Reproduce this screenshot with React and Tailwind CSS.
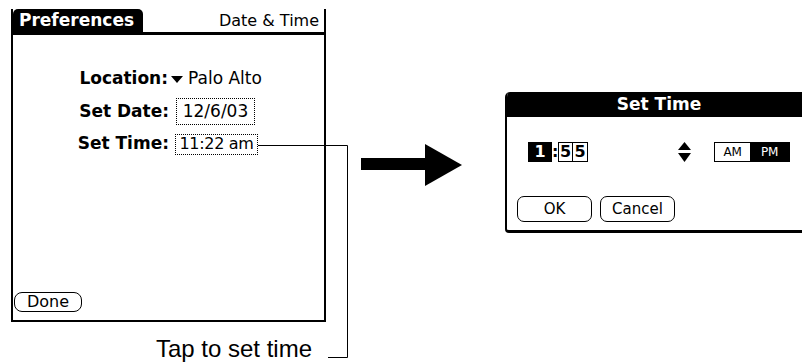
import React from 'react'

// Palm-style pieces
function DropTriangle() {
  return (
    <svg width="12" height="7" viewBox="0 0 12 7" className="mr-[5px]">
      <polygon points="0,0 12,0 6,7" fill="black" />
    </svg>
  )
}

function PalmScreen() {
  return (
    <div className="w-[315px] h-[313px] border-x-2 border-b-2 border-black flex flex-col">
      {/* Title bar */}
      <div className="h-[26px] border-b-[3px] border-black flex items-stretch justify-between">
        <div className="w-[130px] bg-black rounded-tl-[5px] rounded-tr-[5px] text-white font-bold text-[17px] leading-none flex items-center pl-[6px]">
          Preferences
        </div>
        <div className="text-[16px] leading-none flex items-center pr-[5px]">Date &amp; Time</div>
      </div>

      {/* Rows */}
      <div className="flex flex-col mt-[31px] gap-[6px]">
        <div className="h-[26px] flex items-center">
          <div className="w-[156px] text-right font-bold text-[17px] pr-[1px]">Location:</div>
          <div className="flex items-center ml-[2px] text-[17px]">
            <DropTriangle />
            Palo Alto
          </div>
        </div>
        <div className="h-[27px] flex items-center">
          <div className="w-[156px] text-right font-bold text-[17px]">Set Date:</div>
          <div className="ml-[7px] h-[27px] w-[79px] border border-dotted border-black flex items-center justify-center text-[17px] whitespace-nowrap">
            12/6/03
          </div>
        </div>
        <div className="h-[26px] flex items-center">
          <div className="w-[156px] text-right font-bold text-[17px]">Set Time:</div>
          <div className="ml-[6px] h-[21px] w-[83px] border border-dotted border-black flex items-center justify-center text-[16px] tracking-[-0.3px] whitespace-nowrap">
            11:22 am
          </div>
        </div>
      </div>

      {/* Done button */}
      <div className="mt-auto mb-[8px] ml-[1px]">
        <div className="w-[68px] h-[20px] border-[1.5px] border-black rounded-[8px] flex items-center justify-center text-[16px] leading-none">
          Done
        </div>
      </div>
    </div>
  )
}

function SetTimeDialog() {
  return (
    <div className="w-[310px] h-[141px] shrink-0 border-l-2 border-b-[3px] border-black rounded-tl-[5px] rounded-bl-[4px] overflow-hidden flex flex-col">
      <div className="h-[25px] bg-black text-white font-bold text-[17px] leading-none flex items-center justify-center pr-[4px]">
        Set Time
      </div>
      <div className="flex items-center mt-[25px] ml-[21px] h-[20px] font-bold text-[16px] leading-none">
        <div className="w-[24px] h-[20px] bg-black text-white flex items-center justify-center">1</div>
        <div className="w-[6px] text-center">:</div>
        <div className="h-[20px] flex border border-black">
          <div className="w-[14px] flex items-center justify-center border-r border-black">5</div>
          <div className="w-[14px] flex items-center justify-center">5</div>
        </div>
        <svg width="13" height="20" viewBox="0 0 13 20" className="ml-[90px]">
          <polygon points="6.5,0 13,8 0,8" fill="black" />
          <polygon points="0,11 13,11 6.5,20" fill="black" />
        </svg>
        <div className="ml-[23px] h-[20px] flex border border-black text-[12px] font-normal tracking-tight">
          <div className="w-[35px] flex items-center justify-center">AM</div>
          <div className="w-[39px] bg-black text-white flex items-center justify-center">PM</div>
        </div>
      </div>
      <div className="flex gap-[8px] mt-[34px] ml-[10px]">
        <div className="w-[75px] h-[26px] border-[1.5px] border-black rounded-[7px] flex items-center justify-center text-[15px]">OK</div>
        <div className="w-[75px] h-[26px] border-[1.5px] border-black rounded-[7px] flex items-center justify-center text-[15px]">Cancel</div>
      </div>
    </div>
  )
}

export default function App() {
  return (
    <div className="relative w-[802px] h-[364px] bg-white text-black overflow-hidden flex items-start font-['DejaVu_Sans',sans-serif]">
      <div className="ml-[11px] mt-[9px] flex flex-col">
        <PalmScreen />
        <div className="mt-[15px] flex justify-end pr-[14px] font-['Liberation_Sans',Arial,sans-serif] text-[24px] leading-none">
          Tap to set time
        </div>
      </div>

      {/* big arrow */}
      <svg width="101" height="42" viewBox="0 0 101 42" className="ml-[35px] mt-[144px] shrink-0">
        <rect x="0" y="14" width="65" height="12" fill="black" />
        <polygon points="64,0 101,21 64,42" fill="black" />
      </svg>

      <div className="ml-[43px] mt-[92px]">
        <SetTimeDialog />
      </div>

      {/* callout connector */}
      <svg className="absolute inset-0 pointer-events-none" width="802" height="364">
        <polyline points="258,145.5 347.5,145.5 347.5,357.5 328,357.5" fill="none" stroke="black" strokeWidth="1" />
      </svg>
    </div>
  )
}
